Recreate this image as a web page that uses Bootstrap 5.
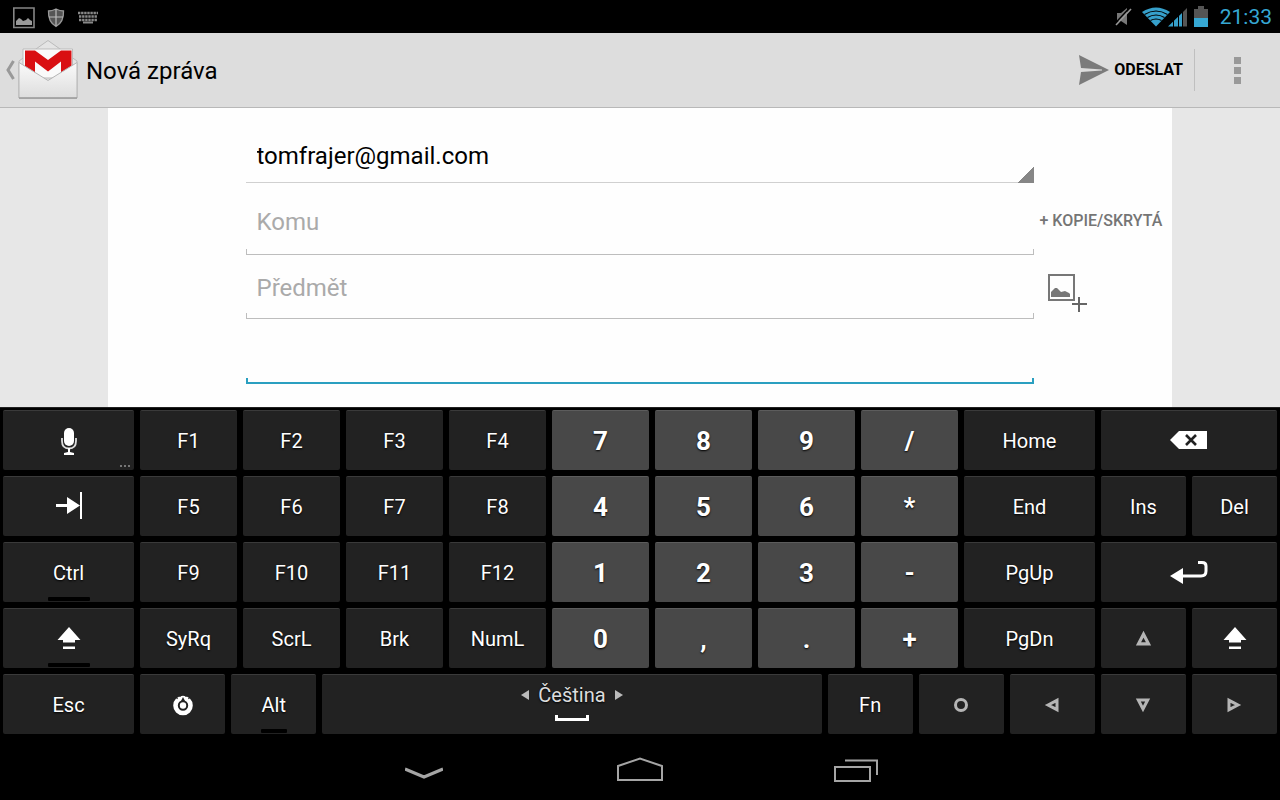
<!DOCTYPE html>
<html lang="cs">
<head>
<meta charset="utf-8">
<meta name="viewport" content="width=device-width, initial-scale=1">
<title>Nová zpráva</title>
<link href="https://cdn.jsdelivr.net/npm/bootstrap@5.3.0/dist/css/bootstrap.min.css" rel="stylesheet">
<style>
body{font-family:Roboto,"Noto Sans",sans-serif;background:#000;color:#000}
button{border:0;background:none;padding:0;color:inherit;font-family:inherit}
svg{display:block;flex:none}
.status{height:33px;background:#000;color:#36a8d4;font-size:21px;line-height:33px;padding:2px 8px 0 12px}
.appbar{height:75px;background:#ddd;border-bottom:1px solid #b8b8b8;padding:0 37px 0 5px}
.title{font-size:24px;line-height:32px;font-weight:400;margin:0;padding-top:2px}
.send{font-size:16px;line-height:24px;font-weight:700;gap:5px;padding-right:11px;border-right:1px solid #bfbfbf;height:42px}
.desk{background:#e7e7e7}
.paper{width:83.2%;background:#fefefe;display:grid;grid-template-columns:138fr 789fr 138fr;grid-template-rows:75px 72px 64px 65px}
.paper>*{grid-column:2;min-width:0}
.paper>.side{grid-column:3}
.field{appearance:none;border:0;border-radius:0;outline:0;width:100%;font-size:24px;line-height:32px;padding:0 11px;color:#000;
 --c:#bdbdbd;--w:1px;background:linear-gradient(var(--c),var(--c)) left bottom/100% var(--w) no-repeat,linear-gradient(var(--c),var(--c)) left bottom/var(--w) 6px no-repeat,linear-gradient(var(--c),var(--c)) right bottom/var(--w) 6px no-repeat}
.field::placeholder{color:#aaa;opacity:1}
.account{padding:20px 11px 0;background:linear-gradient(135deg,transparent 50%,#868686 50%) right bottom/16px 16px no-repeat,linear-gradient(#d0d0d0,#d0d0d0) left bottom/100% 1px no-repeat}
.to{padding-top:6px}
.subject{padding-top:2px}
.message{--c:#2a9fc0;--w:2px;resize:none}
.cc{font-size:16px;line-height:24px;font-weight:500;color:#757575;white-space:nowrap;padding:4px 0 0 5px}
.attach{padding:12px 0 0 13px}
.keys{background:#000;border-top:1px solid #222;padding:2px 3px 6px;color:#fff}
.keyrow{display:flex;gap:6px;margin-bottom:6px}
.key{position:relative;height:60px;min-width:0;background:#222;border-top:1px solid #3a3a3a;border-radius:2px;flex:97 1 0;display:flex;align-items:center;justify-content:center;font-size:20px;line-height:24px;text-shadow:0 1px 2px #000}
.num{background:#484848;border-top-color:#5c5c5c;font-size:26px;font-weight:700}
.wide{flex-grow:131}.double{flex-grow:176}.half{flex-grow:85}.space{flex-grow:499;flex-direction:column;color:#ddd;padding-bottom:6px}
.lock::after{content:"";position:absolute;bottom:1px;left:calc(50% - 21px);width:42px;height:4px;background:#000;border-radius:1px}
.lock.half::after{left:calc(50% - 13px);width:26px}
.more{position:absolute;right:3px;bottom:2px}
.sysnav{height:60px;background:#000}
.sysnav button{width:216px;height:60px;display:flex;align-items:center;justify-content:center}
</style>
</head>
<body class="d-flex flex-column min-vh-100">
<svg width="0" height="0" class="position-absolute" aria-hidden="true">
 <symbol id="shift" viewBox="0 0 24 24"><path fill="#fff" d="M12 0 23.500 13H18V15.500H6V13H.5zM6 19.500H18V22H6z"/></symbol>
 <symbol id="tri" viewBox="0 0 16 16"><path fill="none" stroke="#b5b5b5" stroke-width="3" d="M8 4 12.700 13H3.300z"/></symbol>
</svg>

<div class="status d-flex align-items-center justify-content-between">
 <div class="d-flex align-items-center">
  <svg width="90" height="28" viewBox="0 0 90 28">
   <path fill="none" stroke="#858585" stroke-width="1.600" d="M1.800 4H22V23.500H1.800z"/><path fill="#999" d="M4 21v-4l3-3 2 1 2 2 3-1 2-2 2 2 2 1v4z"/>
   <path fill="#555" stroke="#999" stroke-width="1.300" d="M44 5Q40 7 36.500 7 36 18 44 22.500 52 18 51.500 7 48 7 44 5z"/><path fill="none" stroke="#bbb" stroke-width="1.200" d="M44 5V22M37 13H51"/>
   <path fill="none" stroke="#888" stroke-width="2.400" stroke-dasharray="2.400 .7" d="M66 9H86M67 12.500H85M67 16H85"/><path fill="none" stroke="#888" stroke-width="2" d="M71 18.500H81"/>
  </svg>
 </div>
 <div class="d-flex align-items-center">
  <svg width="103" height="28" viewBox="0 0 103 28">
   <path fill="#777" d="M8 9h4l6-5v17l-6-4H8z"/><path stroke="#000" stroke-width="1.500" d="M6 19.500 20 4.500"/><path stroke="#999" stroke-width="1.600" d="M7 21 22 5"/>
   <path fill="#36a0cb" d="M47 22.500 33 8Q47-1 61 8z"/><g fill="none" stroke="#000" stroke-width="1.200"><path d="M35.500 10.500q11.500-7 23 0M38.500 13.500q8.500-5 17 0M41.500 16.500q5.500-3 11 0"/></g>
   <path fill="#36a0cb" d="M59 22.500 73 9V22.500z"/><path fill="#555" d="M73 9 78 4V22.500H73z"/><path stroke="#000" d="M64.500 12V23M69.500 8V23M73.500 5V23"/>
   <path fill="#555" d="M85 5H89V2H95V5H99V15H85z"/><path fill="#36a8d4" d="M85 14H99V23H85z"/>
  </svg>
  <span class="ms-2">21:33</span>
 </div>
</div>

<header class="appbar d-flex align-items-center">
 <button type="button" class="me-2" aria-label="Zpět">
  <svg width="73" height="64" viewBox="0 0 73 64">
   <defs><linearGradient id="env" x1="0" y1="0" x2="0" y2="1"><stop stop-color="#fafafa"/><stop offset="1" stop-color="#ddd"/></linearGradient></defs>
   <path fill="none" stroke="#999" stroke-width="3" d="M8.500 23 3 32 8.500 41"/>
   <path fill="#e4e4e4" stroke="#bbb" d="M14 23 43 2.500 72 23V60H14z"/>
   <path fill="#fafafa" stroke="#bbb" d="M18 11H67.500V40H18z"/>
   <path fill="#d90f12" d="M20 12.500H30L43 22 56 12.500H66.500V38H56V23.500L43 33.500 30 23.500V38H20z"/>
   <path fill="url(#env)" stroke="#b5b5b5" d="M14 24.500 43 42.500 72 24.500V60H14z"/>
   <path stroke="#888" d="M14 60H72"/>
  </svg>
 </button>
 <h1 class="title flex-grow-1">Nová zpráva</h1>
 <button type="button" class="send d-flex align-items-center">
  <svg width="30" height="30" viewBox="0 0 30 30"><path fill="#7b7b7b" d="M0 0 30 15 0 30 2 17 23 15.500V14.500L2 13z"/></svg>ODESLAT
 </button>
 <button type="button" class="ms-auto ps-4" aria-label="Další možnosti">
  <svg width="24" height="28" viewBox="0 0 24 28" fill="#999"><path d="M15 1h7v7h-7zM15 11h7v7h-7zM15 21h7v7h-7z"/></svg>
 </button>
</header>

<main class="desk d-flex justify-content-center flex-grow-1">
 <form class="paper">
  <select class="field account" aria-label="Od"><option>tomfrajer@gmail.com</option></select>
  <input class="field to" type="text" placeholder="Komu" aria-label="Komu">
  <button type="button" class="side cc text-start">+ KOPIE/SKRYTÁ</button>
  <input class="field subject" type="text" placeholder="Předmět" aria-label="Předmět">
  <button type="button" class="side attach" aria-label="Připojit obrázek">
   <svg width="40" height="40" viewBox="0 0 40 40"><path fill="none" stroke="#777" stroke-width="2" d="M2 2H27V27H2z"/><path fill="#777" d="M4 24v-5l4-4 2 0 4 4 4-1 4 2 1 1v3z"/><path stroke="#fff" stroke-width="6" d="M26 31H37M32 28V36"/><path stroke="#666" stroke-width="2" d="M25 31H40M32 24V39"/></svg>
  </button>
  <textarea class="field message" aria-label="Text zprávy"></textarea>
 </form>
</main>

<section class="keys" aria-label="Klávesnice">
 <div class="keyrow">
  <button class="key wide" aria-label="Hlasové zadávání"><svg width="20" height="30" viewBox="0 0 20 30"><rect x="5" y="2" width="10" height="18" rx="5" fill="#fff"/><path fill="none" stroke="#ddd" stroke-width="1.800" d="M3 12v3q0 7.500 7 7.500t7-7.500v-3"/><path fill="#fff" d="M9 22h2v4l4 1v2H5v-2l4-1z"/></svg>
   <svg class="more" width="12" height="4" fill="#777"><path d="M1 1h2v2H1zM5 1h2v2H5zM9 1h2v2H9z"/></svg></button>
  <button class="key">F1</button><button class="key">F2</button><button class="key">F3</button><button class="key">F4</button>
  <button class="key num">7</button><button class="key num">8</button><button class="key num">9</button><button class="key num">/</button>
  <button class="key wide">Home</button>
  <button class="key double" aria-label="Smazat"><svg width="38" height="22" viewBox="0 0 38 22"><path fill="#fff" d="M0 10 9 1H37V19H9z"/><path stroke="#222" stroke-width="2.600" d="M16 5 26 15M26 5 16 15"/></svg></button>
 </div>
 <div class="keyrow">
  <button class="key wide" aria-label="Tabulátor"><svg width="26" height="34" viewBox="0 0 26 34"><path fill="#fff" d="M0 14H11V7L24 15.500 11 24V17H0zM24 2h2v27h-2z"/></svg></button>
  <button class="key">F5</button><button class="key">F6</button><button class="key">F7</button><button class="key">F8</button>
  <button class="key num">4</button><button class="key num">5</button><button class="key num">6</button><button class="key num">*</button>
  <button class="key wide">End</button><button class="key half">Ins</button><button class="key half">Del</button>
 </div>
 <div class="keyrow">
  <button class="key wide lock">Ctrl</button>
  <button class="key">F9</button><button class="key">F10</button><button class="key">F11</button><button class="key">F12</button>
  <button class="key num">1</button><button class="key num">2</button><button class="key num">3</button><button class="key num">-</button>
  <button class="key wide">PgUp</button>
  <button class="key double" aria-label="Enter"><svg width="38" height="28" viewBox="0 0 38 28"><path fill="#fff" d="M0 17 13 9V25z"/><path fill="none" stroke="#fff" stroke-width="3" d="M12 17H31Q36 17 36 12V7Q36 3.500 32 3.500H28"/></svg></button>
 </div>
 <div class="keyrow">
  <button class="key wide lock" aria-label="Shift"><svg width="24" height="24"><use href="#shift"/></svg></button>
  <button class="key">SyRq</button><button class="key">ScrL</button><button class="key">Brk</button><button class="key">NumL</button>
  <button class="key num">0</button><button class="key num">,</button><button class="key num">.</button><button class="key num">+</button>
  <button class="key wide">PgDn</button>
  <button class="key half" aria-label="Nahoru"><svg width="17" height="17"><use href="#tri"/></svg></button>
  <button class="key half" aria-label="Pravý shift"><svg width="24" height="24"><use href="#shift"/></svg></button>
 </div>
 <div class="keyrow mb-0">
  <button class="key wide">Esc</button>
  <button class="key half" aria-label="Nastavení"><svg width="22" height="22" viewBox="0 0 22 22"><circle cx="11" cy="11.500" r="7.500" fill="none" stroke="#fff" stroke-width="4.600"/><circle cx="11" cy="11.500" r="3.200" fill="#fff"/><path fill="#222" d="M11 3 13 7H9z"/><path stroke="#222" stroke-width="1.200" fill="none" d="M8 0V3M14 0V3M4 3 5.500 5M18 3 16.500 5"/></svg></button>
  <button class="key half lock">Alt</button>
  <button class="key space"><span class="d-flex align-items-center gap-2"><svg width="9" height="10" fill="#bbb"><path d="M8 0V10L0 5z"/></svg>Čeština<svg width="9" height="10" fill="#bbb"><path d="M1 0V10L9 5z"/></svg></span><svg class="mt-2" width="34" height="6" viewBox="0 0 34 6"><path fill="none" stroke="#fff" stroke-width="3" d="M1.500 0V4.500H32.500V0"/></svg></button>
  <button class="key half">Fn</button>
  <button class="key half" aria-label="Střed"><svg width="16" height="16"><circle cx="8" cy="8" r="5.500" fill="none" stroke="#b5b5b5" stroke-width="3"/></svg></button>
  <button class="key half" aria-label="Vlevo"><svg width="16" height="16"><use href="#tri" transform="rotate(-90 8 8)"/></svg></button>
  <button class="key half" aria-label="Dolů"><svg width="16" height="16"><use href="#tri" transform="rotate(180 8 8)"/></svg></button>
  <button class="key half" aria-label="Vpravo"><svg width="16" height="16"><use href="#tri" transform="rotate(90 8 8)"/></svg></button>
 </div>
</section>

<nav class="sysnav d-flex justify-content-center" aria-label="Systém">
 <button type="button" aria-label="Skrýt klávesnici"><svg width="38" height="26" viewBox="0 0 38 26"><path fill="none" stroke="#a5a5a5" stroke-width="3" d="M0 12 19 20 38 12"/></svg></button>
 <button type="button" aria-label="Plocha"><svg width="48" height="26" viewBox="0 0 48 26"><path fill="none" stroke="#a5a5a5" stroke-width="2" d="M2 23V9L24 1.500 46 9V23z"/></svg></button>
 <button type="button" aria-label="Poslední aplikace"><svg width="46" height="26" viewBox="0 0 46 26"><path fill="none" stroke="#a5a5a5" stroke-width="2" d="M2 10H37V24H2zM12 3.500H44V18"/></svg></button>
</nav>
<script src="https://cdn.jsdelivr.net/npm/bootstrap@5.3.0/dist/js/bootstrap.bundle.min.js"></script>
</body>
</html>
